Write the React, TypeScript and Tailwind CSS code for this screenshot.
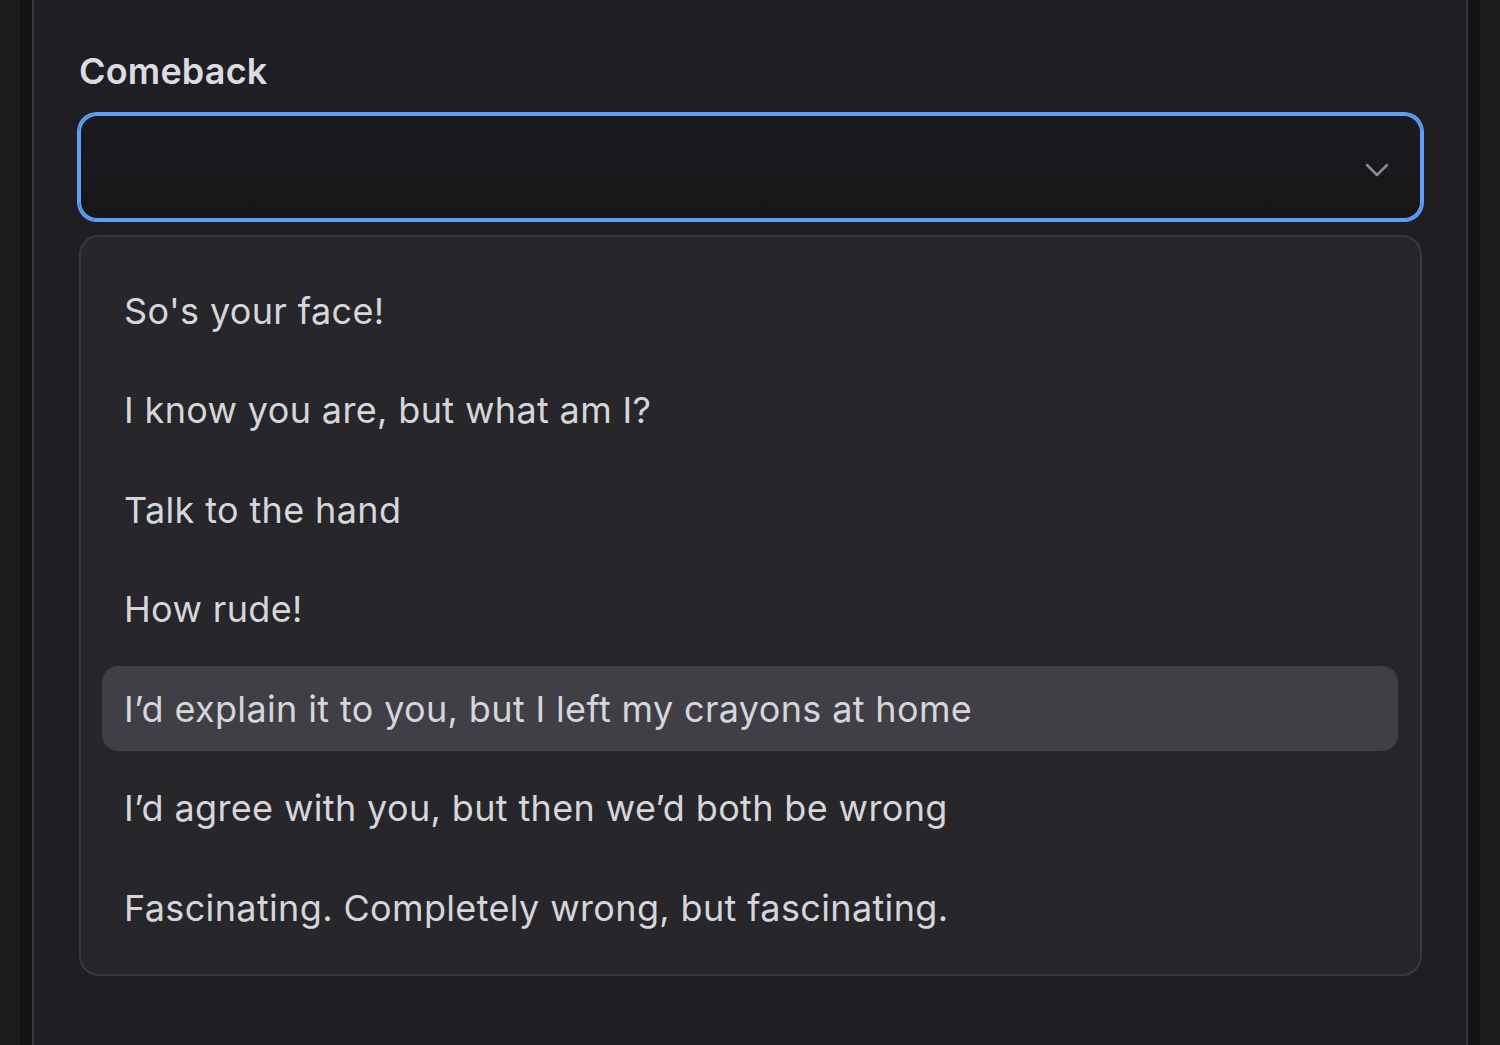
const comebacks = [
  "So's your face!",
  'I know you are, but what am I?',
  'Talk to the hand',
  'How rude!',
  'I’d explain it to you, but I left my crayons at home',
  'I’d agree with you, but then we’d both be wrong',
  'Fascinating. Completely wrong, but fascinating.',
];

const ACTIVE = 4;

export default function App() {
  return (
    <div
      className="flex h-[1045px] w-[1500px] overflow-hidden bg-[#1c1c1f]"
      style={{ fontFamily: 'Inter, "Noto Sans", sans-serif' }}
    >
      <div className="w-[20px] shrink-0 bg-[#1c1c1f]" />
      <div className="w-[12px] shrink-0 bg-[#141416]" />

      {/* Panel */}
      <div className="flex-1 border-x-2 border-[#36363b] bg-[#1f1f23] pl-[45px] pr-[44px] pt-[47px]">
        <label className="block text-[36px] font-semibold leading-[48px] tracking-[0.005em] text-[#dcdce0]">
          Comeback
        </label>

        {/* Select trigger */}
        <button className="mt-[19px] flex h-[106px] w-full items-center justify-end rounded-[18px] border-2 border-[#5f9ff5] bg-gradient-to-b from-[#1b1b1f] to-[#161619] pr-[31px] shadow-[0_0_0_2px_#5f9ff5]">
          <svg width="24" height="16" viewBox="0 0 24 16" fill="none" className="mt-[5px]">
            <path d="M2 3 L12 13 L22 3" stroke="#8a8a90" strokeWidth="2.5" strokeLinecap="round" strokeLinejoin="round" />
          </svg>
        </button>

        {/* Listbox */}
        <ul className="mt-[15px] flex flex-col gap-[14.5px] rounded-[20px] border-2 border-[#38383d] bg-[#26262b] pb-[24px] pl-[21px] pr-[22px] pt-[31px]">
          {comebacks.map((c, i) => (
            <li
              key={c}
              className={
                'flex h-[85px] items-center rounded-[16px] px-[22px] text-[36px] tracking-[0.01em] text-[#d6d6da] ' +
                (i === ACTIVE ? 'bg-[#3f3f45]' : '')
              }
            >
              {c}
            </li>
          ))}
        </ul>
      </div>

      <div className="w-[12px] shrink-0 bg-[#141416]" />
      <div className="w-[20px] shrink-0 bg-[#1c1c1f]" />
    </div>
  );
}
